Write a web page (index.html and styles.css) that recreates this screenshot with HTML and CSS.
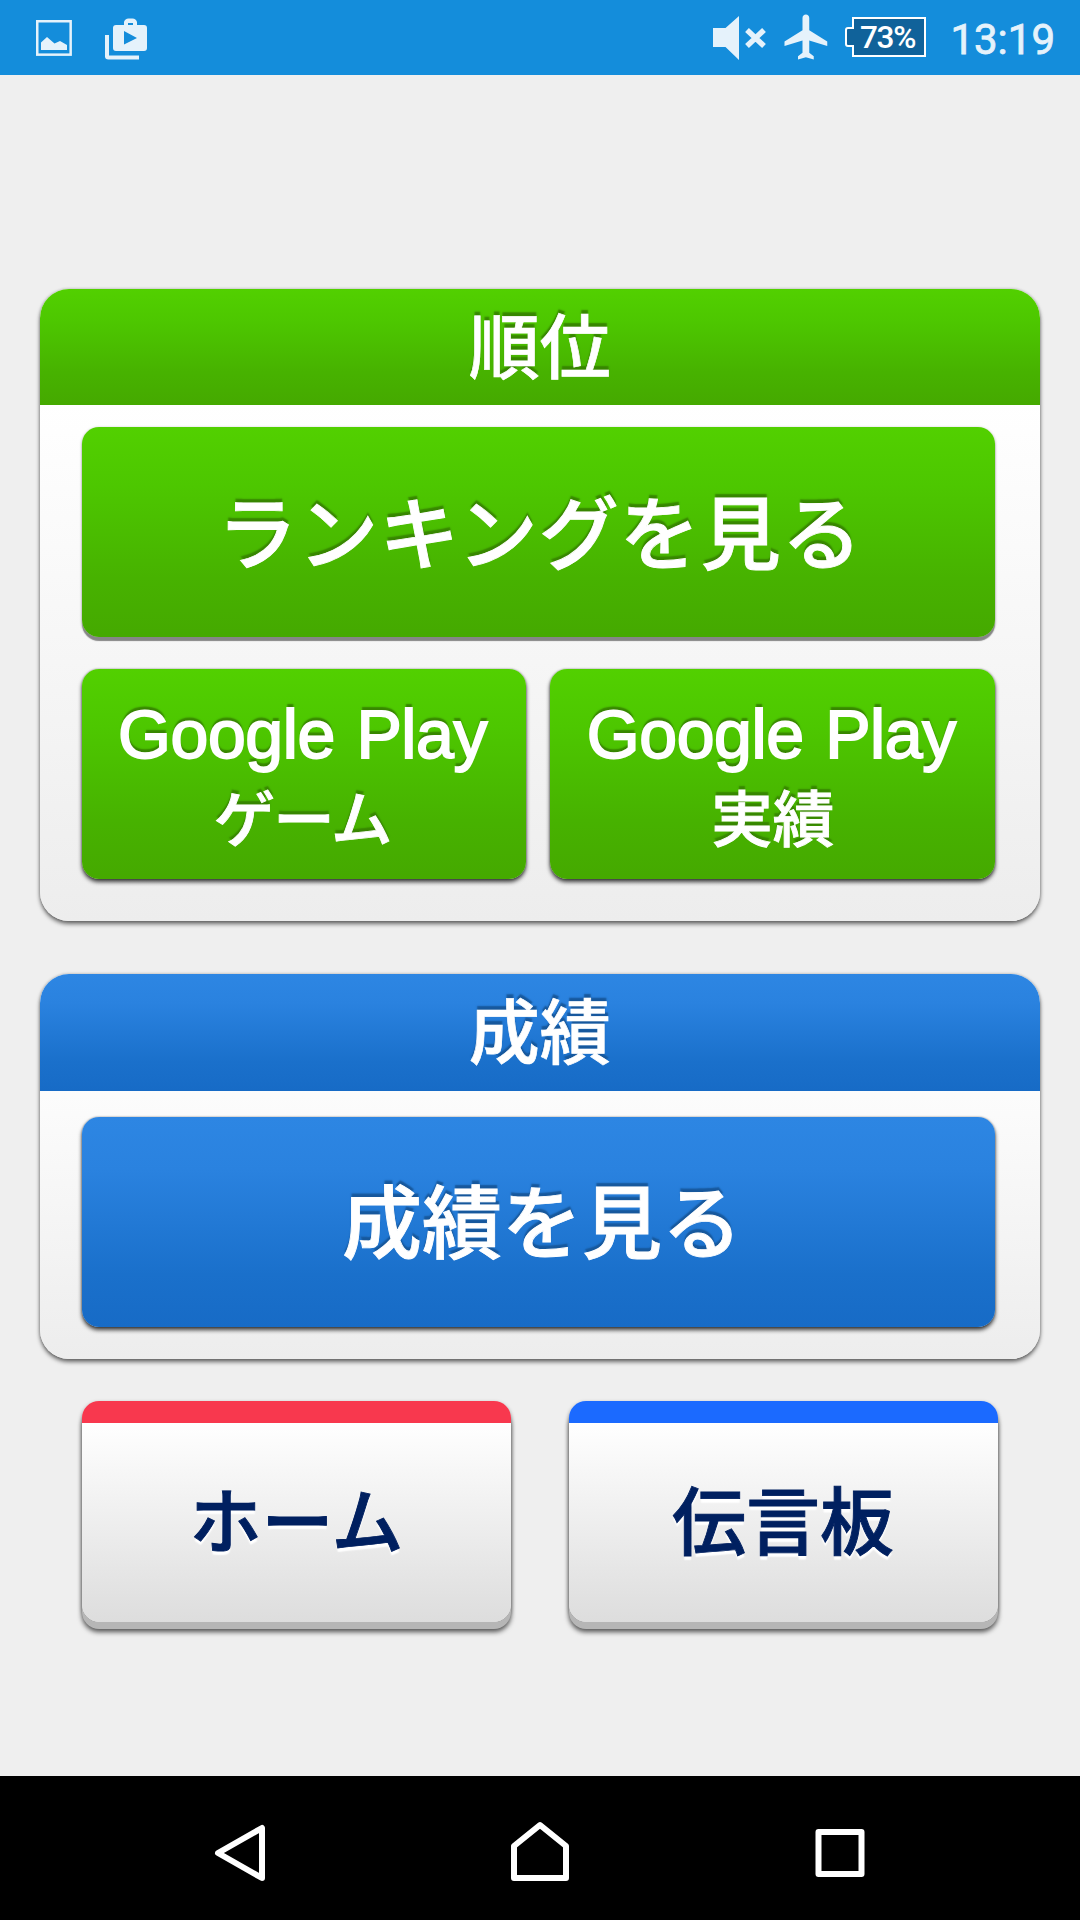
FILE: index.html
```html
<!DOCTYPE html>
<html lang="ja">
<head>
<meta charset="utf-8">
<title>順位・成績</title>
<link rel="stylesheet" href="styles.css">
</head>
<body>
<header class="status">
  <div class="status-left">
    <svg class="icon-photo" width="36" height="36" viewBox="0 0 36 36">
      <rect x="1.25" y="1.25" width="33.4" height="33.4" fill="none" stroke="currentColor" stroke-width="2.5"/>
      <path d="M5 30V22.5L11 17L18.5 23.5L24 21L31 25V30Z" fill="currentColor"/>
    </svg>
    <svg class="icon-store" width="43" height="42" viewBox="0 0 43 42">
      <path d="M2 17V38.5Q2 39.5 3.500 39.500H34" fill="none" stroke="currentColor" stroke-width="4"/>
      <path fill="currentColor" fill-rule="evenodd" d="M19 7V4Q20 .5 23.500 .5H27.500Q31 .5 32 4V7H39Q42 7 42 10V30Q42 33 39 33H11Q8 33 8 30V10Q8 7 11 7ZM23 5V7H28V5ZM19 13V26.500L32 20Z"/>
    </svg>
  </div>
  <div class="status-right">
    <svg class="icon-mute" width="53" height="44" viewBox="0 0 53 44">
      <path d="M0 12H12.500L26 0V44L12.500 31H0Z" fill="currentColor"/>
      <path d="M34 14L51 30M51 14L34 30" stroke="currentColor" stroke-width="5.500"/>
    </svg>
    <svg class="icon-plane" width="54" height="54" viewBox="0 0 24 24">
      <path fill="currentColor" d="M21 16v-2l-8-5V3.500c0-.83-.67-1.500-1.500-1.500S10 2.670 10 3.500V9l-8 5v2l8-2.500V19l-2 1.500V22l3.500-1 3.500 1v-1.500L13 19v-5.500l8 2.500z"/>
    </svg>
    <div class="battery">
      <svg width="81" height="40" viewBox="0 0 81 40">
        <path d="M8 1H80V39H8V29H3Q1 29 1 27V13Q1 11 3 11H8Z" fill="#10629a" stroke="#fff" stroke-width="2"/>
      </svg>
      <span class="battery-level">73%</span>
    </div>
    <span class="clock">13:19</span>
  </div>
</header>

<main class="screen">
  <section class="panel panel-rank">
    <h2 class="panel-title green">順位</h2>
    <div class="panel-body">
      <button class="btn green thick"><span class="ranking">ランキングを見る</span></button>
      <div class="btn-row">
        <button class="btn green small"><span class="latin">Google Play</span><span class="sub sub-kana">ゲーム</span></button>
        <button class="btn green small"><span class="latin">Google Play</span><span class="sub">実績</span></button>
      </div>
    </div>
  </section>

  <section class="panel panel-score">
    <h2 class="panel-title blue">成績</h2>
    <div class="panel-body">
      <button class="btn blue"><span class="results">成績を見る</span></button>
    </div>
  </section>

  <div class="tabs">
    <button class="tab tab-home"><span>ホーム</span></button>
    <button class="tab tab-board"><span>伝言板</span></button>
  </div>
</main>

<nav class="navbar">
  <svg width="52" height="60" viewBox="0 0 52 60"><path d="M48 5V55L4 30Z"/></svg>
  <svg class="nav-home" width="60" height="62" viewBox="0 0 60 62"><path d="M4 58V26L30 5L56 26V58Z"/></svg>
  <svg width="50" height="50" viewBox="0 0 50 50"><rect x="3.500" y="4" width="43" height="42"/></svg>
</nav>
</body>
</html>
```
FILE: styles.css
```css
* { box-sizing: border-box; }

body {
  margin: 0;
  width: 1080px;
  height: 1920px;
  display: flex;
  flex-direction: column;
  background: #efefef;
  font-family: "Noto Sans CJK JP", sans-serif;
  overflow: hidden;
}

button {
  border: 0;
  padding: 0;
  margin: 0;
  font: inherit;
  color: inherit;
}

svg { display: block; flex: none; }

/* status bar */
.status {
  height: 75px;
  flex: none;
  display: flex;
  justify-content: space-between;
  padding: 0 25px 0 36px;
  background: #148ddb;
  color: #e5f2fb;
  font-family: Roboto, sans-serif;
}
.status-left, .status-right { display: flex; }
.icon-photo { margin-top: 20px; }
.icon-store { margin: 18px 0 0 33px; }
.icon-mute { margin-top: 15.500px; }
.icon-plane { margin: 10px 0 0 14px; }
.battery { display: grid; margin: 17px 0 0 11px; width: 81px; height: 40px; }
.battery > * { grid-area: 1 / 1; }
.battery-level {
  padding-left: 14.500px;
  line-height: 41px;
  font-size: 31.500px;
  font-weight: 500;
  letter-spacing: -1.200px;
  color: #fff;
}
.clock {
  margin-left: 24px;
  line-height: 79px;
  font-size: 42px;
  font-weight: 400;
  -webkit-text-stroke: .8px;
}

/* main screen */
.screen {
  flex: 1;
  padding: 214.300px 40px 0 39.500px;
}

.green {
  --shadow: #378600;
  background: linear-gradient(#52d000, #4dc700 28%, #47b200 72%, #45a900);
}
.blue {
  --shadow: #17589c;
  background: linear-gradient(#2d86e3, #2a82df 25%, #1a70cb 75%, #176bc6);
}

.panel {
  border-radius: 29px;
  box-shadow: 0 3px 4px rgba(0, 0, 0, .55), 0 0 3px rgba(0, 0, 0, .25);
  background: linear-gradient(#fff 18%, #ededed);
}
.panel-rank { height: 632.200px; }
.panel-score { height: 384.400px; margin-top: 53px; }

.panel-title {
  height: 116.200px;
  margin: 0;
  border-radius: 29px 29px 0 0;
  color: #fff;
  font-size: 71px;
  line-height: 106px;
  font-weight: 500;
  text-align: center;
  text-shadow: 0 -4px 1.500px var(--shadow);
  -webkit-text-stroke: .7px;
}
.panel-title.blue { line-height: 107px; }

.panel-body { padding: 22px 44.800px 0 42.200px; }
.panel-score .panel-body { padding-top: 26.500px; }

.btn {
  display: flex;
  flex-direction: column;
  align-items: center;
  width: 100%;
  height: 210px;
  border-radius: 17px;
  color: #fff;
  font-size: 80px;
  font-weight: 500;
  line-height: 203px;
  text-shadow: 0 -4px 1.500px var(--shadow);
  box-shadow: 0 3px 4px rgba(0, 0, 0, .75), 0 0 2px rgba(0, 0, 0, .4);
  -webkit-text-stroke: .9px;
}
.btn.thick { box-shadow: 0 4px 1px #868686, 0 1px 3px rgba(0, 0, 0, .4); }
.ranking { letter-spacing: 1px; padding-left: 3px; }
.results { line-height: 201px; padding-left: 7px; }

.btn-row {
  display: grid;
  grid-template-columns: 1fr 1fr;
  gap: 24px;
  margin-top: 31.500px;
}
.latin {
  margin-top: 20px;
  padding-right: 3px;
  font-family: "Liberation Sans", sans-serif;
  font-size: 68px;
  font-weight: 400;
  line-height: 90px;
  letter-spacing: -.4px;
  word-spacing: 3px;
  -webkit-text-stroke: 1.900px;
}
.sub {
  margin-top: 1px;
  font-size: 61.500px;
  line-height: 72px;
}
.sub-kana { letter-spacing: -2px; padding-right: 4px; }

.tabs {
  display: flex;
  justify-content: space-between;
  margin: 42.300px 42.500px 0;
}
.tab {
  width: 429px;
  height: 220.700px;
  border-top: 22.300px solid var(--accent);
  border-radius: 17px;
  background: linear-gradient(#fff, #ddd);
  box-shadow: 0 7px 0 #b6b6b6, 0 9.500px 5px rgba(0, 0, 0, .65), 0 2px 4px rgba(0, 0, 0, .4);
  color: #002060;
  font-size: 74px;
  font-weight: 500;
  line-height: 190px;
  text-shadow: 0 4px 1.500px #fff;
  -webkit-text-stroke: .9px;
}
.tab span { display: block; margin-top: -11px; }
.tab-home { --accent: #f8384e; font-size: 72px; }
.tab-board { --accent: #1b6aff; }

/* navigation bar */
.navbar {
  height: 144px;
  flex: none;
  display: flex;
  align-items: center;
  justify-content: space-between;
  padding: 10px 215px 0 214px;
  background: #000;
}
.navbar svg {
  fill: none;
  stroke: #fff;
  stroke-width: 6;
  stroke-linejoin: round;
}
.nav-home { margin: 0 2px 4px 0; }
```
